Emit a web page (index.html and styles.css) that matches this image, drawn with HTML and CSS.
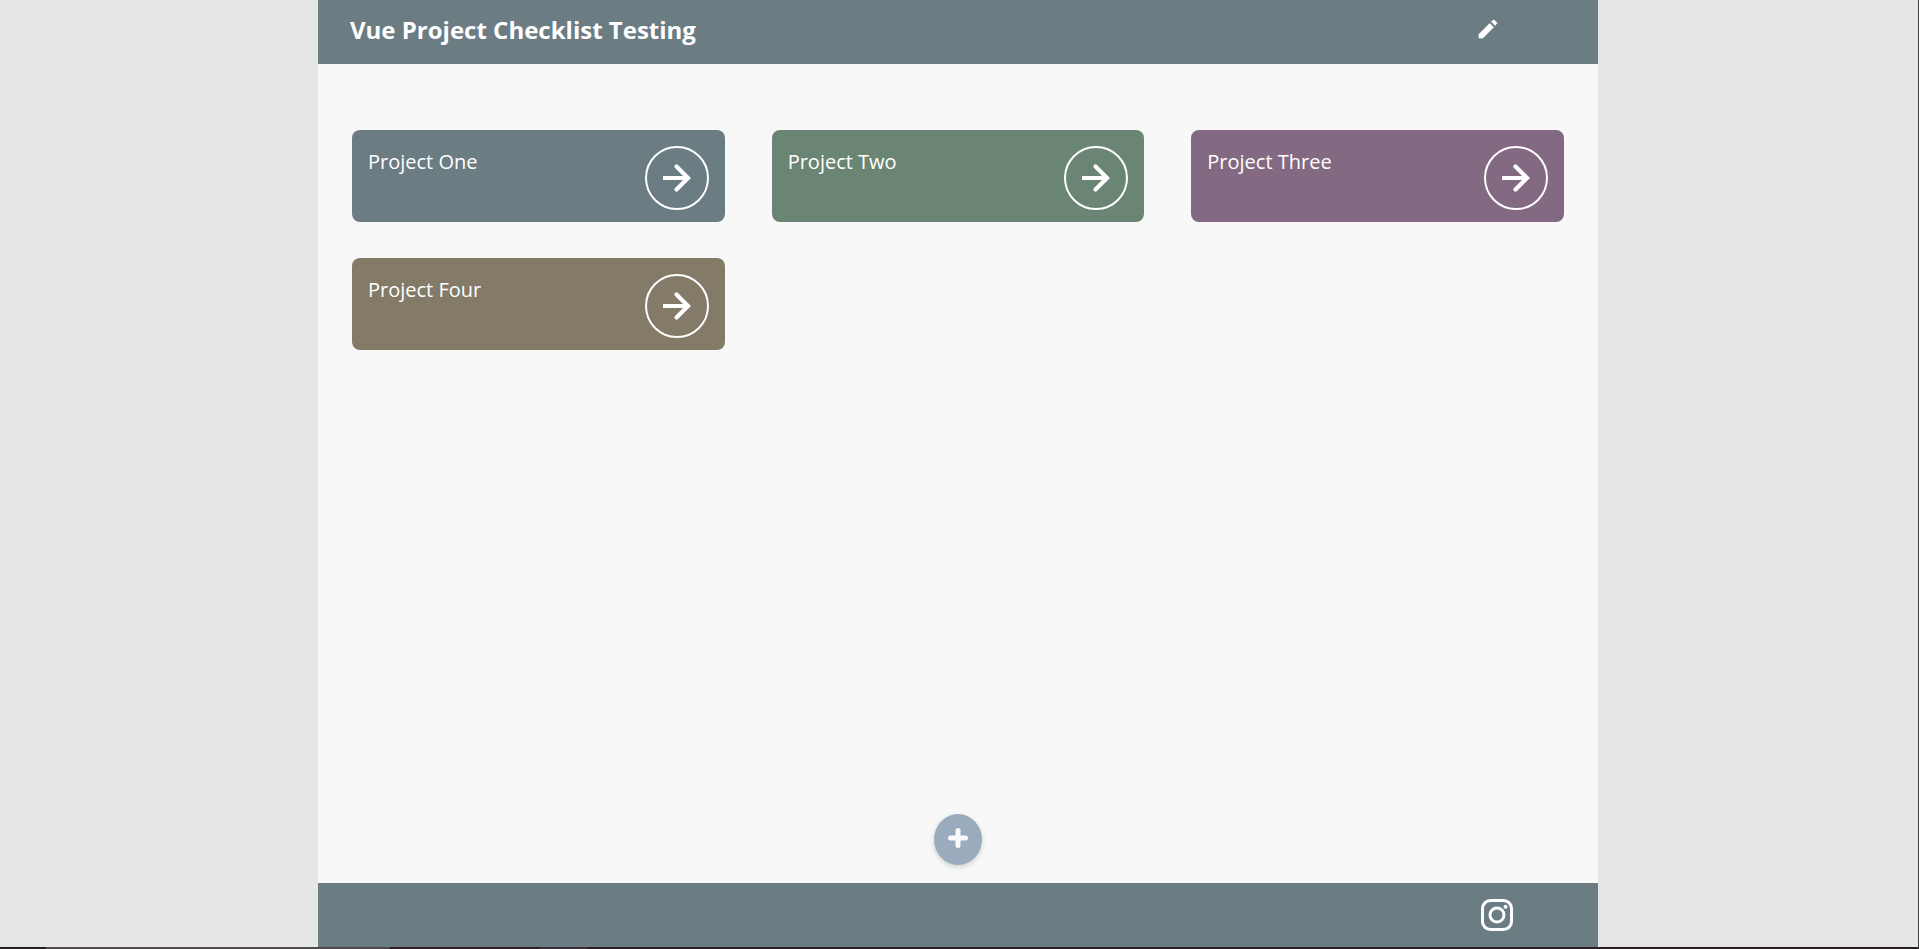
FILE: index.html
```html
<!DOCTYPE html>
<html lang="en">
<head>
<meta charset="utf-8">
<title>Vue Project Checklist Testing</title>
<link rel="stylesheet" href="styles.css">
</head>
<body>
<svg class="defs" aria-hidden="true">
  <symbol id="arrow" viewBox="0 0 64 64">
    <circle cx="32" cy="32" r="31" fill="none" stroke="currentColor" stroke-width="2"/>
    <path d="M18 32h25" fill="none" stroke="currentColor" stroke-width="4"/>
    <path d="M31.5 20.5L43 32 31.5 43.500" fill="none" stroke="currentColor" stroke-width="4.200" stroke-linecap="round"/>
  </symbol>
</svg>
<div class="app">
  <header class="bar">
    <h1 class="title">Vue Project Checklist Testing</h1>
    <button class="icon-button" type="button" aria-label="Edit">
      <svg class="pencil" viewBox="0 0 24 24" aria-hidden="true"><path fill="currentColor" stroke="currentColor" stroke-width=".7" stroke-linejoin="round" d="M20.71 7.04c.39-.39.39-1.04 0-1.41l-2.34-2.34c-.37-.39-1.02-.39-1.41 0l-1.500 1.500 3.750 3.750M3 17.250V21h3.750L17.510 10.230l-3.750-3.750L3 17.250z"/></svg>
    </button>
  </header>
  <main class="content">
    <div class="projects">
      <section class="card slate">
        <h2 class="name">Project One</h2>
        <a class="open" href="#one" aria-label="Open Project One"><svg class="arrow"><use href="#arrow"/></svg></a>
      </section>
      <section class="card green">
        <h2 class="name">Project Two</h2>
        <a class="open" href="#two" aria-label="Open Project Two"><svg class="arrow"><use href="#arrow"/></svg></a>
      </section>
      <section class="card purple">
        <h2 class="name">Project Three</h2>
        <a class="open" href="#three" aria-label="Open Project Three"><svg class="arrow"><use href="#arrow"/></svg></a>
      </section>
      <section class="card olive">
        <h2 class="name">Project Four</h2>
        <a class="open" href="#four" aria-label="Open Project Four"><svg class="arrow"><use href="#arrow"/></svg></a>
      </section>
    </div>
    <button class="add" type="button" aria-label="Add project">
      <svg class="plus" viewBox="0 0 20 20" aria-hidden="true"><path d="M10 2.5v15M2.5 10h15" fill="none" stroke="currentColor" stroke-width="5" stroke-linecap="round"/></svg>
    </button>
  </main>
  <footer class="bar">
    <a class="social" href="#instagram" aria-label="Instagram">
      <svg class="instagram" viewBox="0 0 32 32" aria-hidden="true">
        <rect x="1.5" y="1.5" width="29" height="29" rx="8" fill="none" stroke="currentColor" stroke-width="3"/>
        <circle cx="16" cy="16" r="7" fill="none" stroke="currentColor" stroke-width="3"/>
        <circle cx="24.5" cy="7.7" r="2" fill="currentColor"/>
      </svg>
    </a>
  </footer>
</div>
</body>
</html>
```
FILE: styles.css
```css
* {
  box-sizing: border-box;
}

body {
  margin: 0;
  min-height: 100vh;
  display: flex;
  flex-direction: column;
  padding-right: 2px;
  border-right: 1px solid #3c3c3e;
  background: #e6e6e6;
  font-family: "Open Sans", "Noto Sans", sans-serif;
}

body::after {
  content: "";
  height: 2px;
  margin-right: -3px;
  background: linear-gradient(90deg, #231c20 46px, #4f4a4c 46px 390px, #2e1d22 390px 539px, #362f36 539px 587px, #2b1e22 587px);
}

.defs {
  position: absolute;
  width: 0;
  height: 0;
}

.app {
  flex: 1;
  display: flex;
  flex-direction: column;
  width: 100%;
  max-width: 1280px;
  margin: 0 auto;
  background: #f8f8f8;
}

.bar {
  display: flex;
  align-items: center;
  justify-content: space-between;
  height: 64px;
  padding: 0 85px 0 32px;
  background: #6b7c83;
  color: #fff;
}

.title {
  margin: 0;
  padding-bottom: 4px;
  font-size: 24px;
  line-height: 32px;
  font-weight: 700;
}

.icon-button {
  display: flex;
  padding: 0 13px 6px;
  border: 0;
  background: none;
  color: inherit;
}

.pencil {
  width: 24px;
  height: 24px;
}

.content {
  flex: 1;
  display: flex;
  flex-direction: column;
  align-items: center;
  justify-content: space-between;
  padding: 66px 34px 18px;
}

.projects {
  align-self: stretch;
  display: grid;
  grid-template-columns: repeat(3, 1fr);
  gap: 36px 47px;
}

.card {
  display: flex;
  justify-content: space-between;
  align-items: flex-start;
  padding: 16px 16px 12px;
  border-radius: 8px;
  color: #fff;
}

.slate {
  background: #6b7c83;
}

.green {
  background: #6b8574;
}

.purple {
  background: #836981;
}

.olive {
  background: #837b68;
}

.name {
  margin: 0;
  font-size: 20px;
  line-height: 32px;
  font-weight: 400;
}

.open {
  display: flex;
  color: inherit;
}

.arrow {
  width: 64px;
  height: 64px;
}

.add {
  display: flex;
  align-items: center;
  justify-content: center;
  width: 48px;
  height: 51px;
  padding: 0 0 3px;
  border: 0;
  border-radius: 50%;
  background: #9babbe;
  color: #fafafa;
  box-shadow: 0 2px 5px rgba(107, 123, 131, 0.3);
}

.plus {
  width: 20px;
  height: 20px;
}

.social {
  display: flex;
  margin-left: auto;
  color: inherit;
}

.instagram {
  width: 32px;
  height: 32px;
}

footer.bar {
  flex: none;
}
```
